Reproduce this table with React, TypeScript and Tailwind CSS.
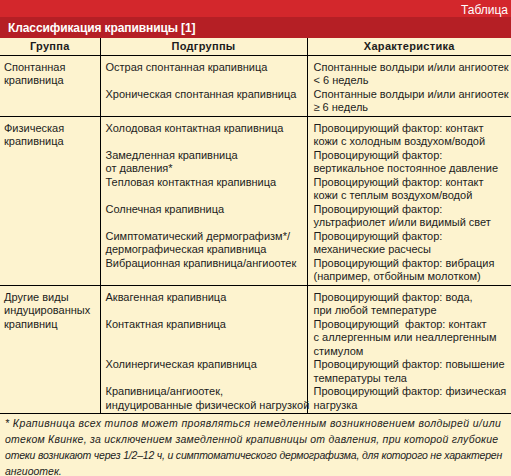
const groups = [
  {
    name: ["Спонтанная", "крапивница"],
    rows: [
      { sub: ["Острая спонтанная крапивница"], desc: ["Спонтанные волдыри и/или ангиоотек", "< 6 недель"] },
      { sub: ["Хроническая спонтанная крапивница"], desc: ["Спонтанные волдыри и/или ангиоотек", "≥ 6 недель"] },
    ],
  },
  {
    name: ["Физическая", "крапивница"],
    rows: [
      { sub: ["Холодовая контактная крапивница"], desc: ["Провоцирующий фактор: контакт", "кожи с холодным воздухом/водой"] },
      { sub: ["Замедленная крапивница", "от давления*"], desc: ["Провоцирующий фактор:", "вертикальное постоянное давление"] },
      { sub: ["Тепловая контактная крапивница"], desc: ["Провоцирующий фактор: контакт", "кожи с теплым воздухом/водой"] },
      { sub: ["Солнечная крапивница"], desc: ["Провоцирующий фактор:", "ультрафиолет и/или видимый свет"] },
      { sub: ["Симптоматический дермографизм*/", "дермографическая крапивница"], desc: ["Провоцирующий фактор:", "механические расчесы"] },
      { sub: ["Вибрационная крапивница/ангиоотек"], desc: ["Провоцирующий фактор: вибрация", "(например, отбойным молотком)"] },
    ],
  },
  {
    name: ["Другие виды", "индуцированных", "крапивниц"],
    rows: [
      { sub: ["Аквагенная крапивница"], desc: ["Провоцирующий фактор: вода,", "при любой температуре"] },
      { sub: ["Контактная крапивница"], desc: ["Провоцирующий  фактор: контакт", "с аллергенным или неаллергенным", "стимулом"] },
      { sub: ["Холинергическая крапивница"], desc: ["Провоцирующий фактор: повышение", "температуры тела"] },
      { sub: ["Крапивница/ангиоотек,", "индуцированные физической нагрузкой"], desc: ["Провоцирующий фактор: физическая", "нагрузка"] },
    ],
  },
];

function Lines({ lines }: { lines: string[] }) {
  return (
    <>
      {lines.map((l, i) => (
        <div key={i} className="whitespace-pre">{l}</div>
      ))}
    </>
  );
}

export default function App() {
  return (
    <div
      className="w-[511px] h-[476px] overflow-hidden bg-[#fdf3cf] text-[#1c1c1c]"
      style={{ fontFamily: '"Liberation Sans", Arial, sans-serif' }}
    >
      <div className="h-[17px] bg-[#d3272c] flex justify-end items-end pr-[3px]">
        <span className="text-white text-[12px] leading-[14px]">Таблица</span>
      </div>
      <div className="h-[21px] bg-[#b51f25] flex items-center pl-[8px]">
        <span className="text-white font-bold text-[12px] tracking-[-0.1px]">Классификация крапивницы [1]</span>
      </div>

      <table className="w-[511px] table-fixed border-collapse text-[11px] leading-[13.5px]">
        <colgroup>
          <col className="w-[100px]" />
          <col className="w-[207px]" />
          <col />
        </colgroup>
        <thead>
          <tr className="h-[17px] border-b border-black">
            {["Группа", "Подгруппы", "Характеристика"].map((h, i) => (
              <th
                key={h}
                className={`p-0 text-center text-[11px] font-bold leading-[16px] tracking-[0.3px] ${i < 2 ? "border-r border-black" : ""}`}
              >
                {h}
              </th>
            ))}
          </tr>
        </thead>
        <tbody>
          {groups.map((g, gi) =>
            g.rows.map((r, ri) => {
              const first = ri === 0;
              const last = ri === g.rows.length - 1;
              const pad = `${first ? "pt-[5px]" : "pt-0"} ${last ? "pb-[1px]" : "pb-0"}`;
              return (
                <tr key={`${gi}-${ri}`} className={last ? "border-b border-black" : ""}>
                  {first && (
                    <td rowSpan={g.rows.length} className="align-top border-r border-black pl-[4px] pt-[5px] p-0">
                      <Lines lines={g.name} />
                    </td>
                  )}
                  <td className={`align-top border-r border-black pl-[5px] pr-0 ${pad}`}>
                    <Lines lines={r.sub} />
                  </td>
                  <td className={`align-top pl-[6px] pr-0 ${pad}`}>
                    <Lines lines={r.desc} />
                  </td>
                </tr>
              );
            })
          )}
        </tbody>
      </table>

      <div className="pl-[5px] pt-[1px] italic text-[10.5px] leading-[16px] whitespace-nowrap">
        <div className="tracking-[0.4px]">* Крапивница всех типов может проявляться немедленным возникновением волдырей и/или</div>
        <div className="tracking-[0.25px]">отеком Квинке, за исключением замедленной крапивницы от давления, при которой глубокие</div>
        <div className="tracking-[-0.2px]">отеки возникают через 1/2–12 ч, и симптоматического дермографизма, для которого не характерен</div>
        <div>ангиоотек.</div>
      </div>
    </div>
  );
}
